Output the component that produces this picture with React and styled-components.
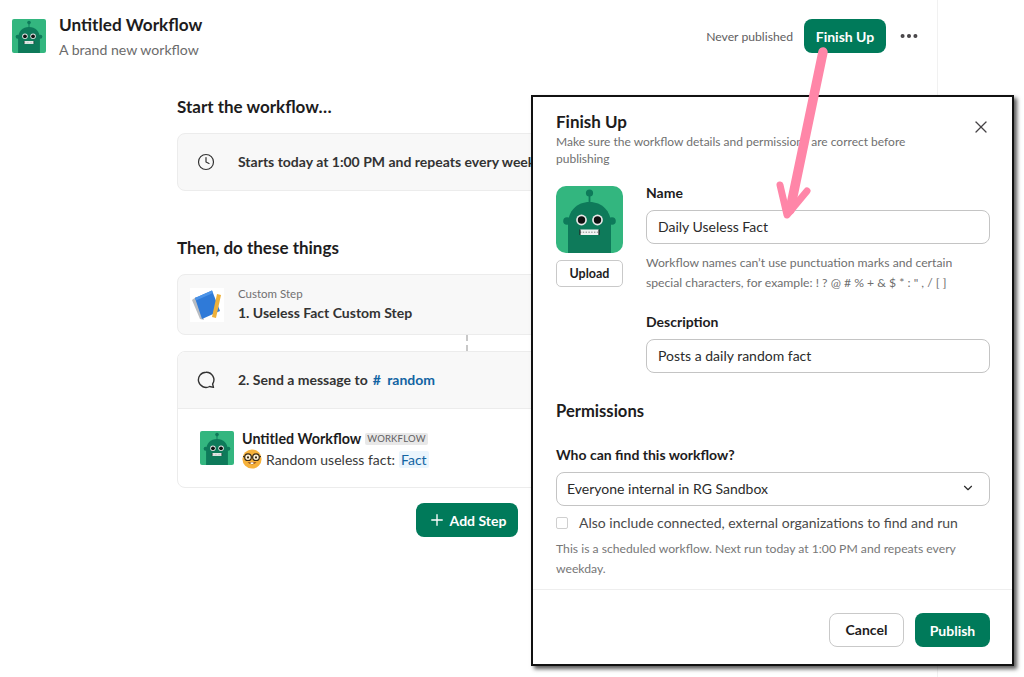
import React from 'react';
import styled, { createGlobalStyle } from 'styled-components';
import { Plus, X, ChevronDown, MoreHorizontal, Clock } from 'lucide-react';

const GlobalStyle = createGlobalStyle`
  html, body {
    margin: 0;
    padding: 0;
    background: #fff;
    font-family: Lato, "Open Sans", sans-serif;
    color: #1d1c1d;
  }
  * { box-sizing: border-box; }
`;

const Page = styled.div`
  position: relative;
  width: 1024px;
  height: 677px;
  overflow: hidden;
  background: #fff;
`;

const Main = styled.div`
  width: 938px;
  height: 677px;
  border-right: 1px solid #f1f1f1;
`;

const Header = styled.header`
  display: flex;
  align-items: flex-start;
  padding: 19px 17px 0 12px;
  height: 96px;
`;

const TitleBlock = styled.div`
  margin: -1px 0 0 13px;
  flex: 1;
`;

const Title = styled.div`
  font-size: 17.2px;
  font-weight: 700;
  line-height: 14px;
`;

const Subtitle = styled.div`
  font-size: 14.1px;
  color: #6b6b6b;
  line-height: 18px;
  margin-top: 9px;
`;

const HeaderRight = styled.div`
  display: flex;
  align-items: center;
  height: 34px;
`;

const Status = styled.span`
  font-size: 12.2px;
  color: #616061;
  margin-right: 11px;
`;

const GreenButton = styled.div`
  display: flex;
  align-items: center;
  justify-content: center;
  background: #007a5a;
  color: #fff;
  font-size: 14px;
  font-weight: 700;
  border-radius: 8px;
  height: 34px;
  width: ${(p) => p.$width}px;
`;

const Dots = styled.div`
  display: flex;
  margin-left: 12px;
  color: #454245;
`;

const Flow = styled.main`
  width: 580px;
  margin-left: 177px;
`;

const SectionTitle = styled.h2`
  margin: 0;
  font-size: 17px;
  font-weight: 700;
  line-height: 22px;
  color: #1d1c1d;
`;

const Card = styled.div`
  border: 1px solid #ececec;
  border-radius: 8px;
  background: #f8f8f8;
  overflow: hidden;
`;

const TriggerCard = styled(Card)`
  display: flex;
  align-items: center;
  height: 58px;
  margin: 15px 0 46px;
`;

const IconSlot = styled.div`
  width: 60px;
  padding-right: 4px;
  display: flex;
  justify-content: center;
  color: #333;
  flex: none;
`;

const StepText = styled.div`
  font-size: 14px;
  font-weight: 700;
  color: #333;
  white-space: nowrap;
  padding-bottom: 2px;
`;

const CustomCard = styled(Card)`
  display: flex;
  align-items: center;
  height: 61px;
  margin-top: 15px;
  padding-left: 12px;
`;

const CustomBody = styled.div`
  margin-left: 14px;
`;

const Eyebrow = styled.div`
  font-size: 11.5px;
  color: #717071;
  line-height: 14px;
  margin-bottom: 3px;
`;

const Connector = styled.div`
  width: 0;
  height: 16px;
  margin-left: 289px;
  border-left: 2px dashed #c8c8c8;
`;

const MessageCard = styled(Card)`
  background: #fff;
  height: 137px;
`;

const MessageHead = styled.div`
  display: flex;
  align-items: center;
  height: 57px;
  background: #f8f8f8;
  border-bottom: 1px solid #ececec;
`;

const ChannelLink = styled.span`
  color: #1264a3;
  margin-left: 5px;
  word-spacing: 3px;
`;

const MessageBody = styled.div`
  display: flex;
  padding: 22px 0 0 22px;
`;

const MessageText = styled.div`
  margin-left: 8px;
`;

const SenderRow = styled.div`
  display: flex;
  align-items: center;
  height: 15px;
  font-size: 14.3px;
  font-weight: 700;
`;

const AppBadge = styled.span`
  margin-left: 4px;
  padding: 0 2px;
  background: #e8e8e8;
  color: #616061;
  border-radius: 2px;
  font-size: 9.5px;
  font-weight: 400;
  line-height: 12px;
  letter-spacing: 0.2px;
`;

const MessageLine = styled.div`
  display: flex;
  align-items: center;
  margin-top: 3px;
  font-size: 14px;
  color: #3a3a3a;
`;

const Variable = styled.span`
  margin-left: 4px;
  padding: 0 2px;
  background: #eaf5fd;
  color: #1264a3;
  border-radius: 2px;
`;

const AddRow = styled.div`
  display: flex;
  justify-content: center;
  margin-top: 15px;
`;

const Modal = styled.section`
  position: absolute;
  left: 531px;
  top: 95px;
  width: 483px;
  height: 571px;
  background: #fff;
  border: 2px solid #111;
  box-shadow: 3px 3px 4px rgba(0, 0, 0, 0.65);
  display: flex;
  flex-direction: column;
`;

const ModalBody = styled.div`
  position: relative;
  flex: 1;
  padding: 15px 22px 0 23px;
  border-bottom: 1px solid #eee;
`;

const ModalTitle = styled.h3`
  margin: 0;
  font-size: 17px;
  font-weight: 700;
  line-height: 20px;
`;

const ModalSub = styled.p`
  margin: 1px 0 0;
  width: 380px;
  font-size: 12px;
  line-height: 17px;
  color: #707070;
`;

const CloseButton = styled.div`
  position: absolute;
  top: 20px;
  right: 21px;
  color: #454245;
  display: flex;
`;

const NameRow = styled.div`
  display: flex;
  margin-top: 19px;
`;

const LogoColumn = styled.div`
  width: 67px;
  flex: none;
  margin-right: 23px;
`;

const SmallButton = styled.div`
  display: flex;
  align-items: center;
  justify-content: center;
  height: 27px;
  margin-top: 7px;
  border: 1px solid #c9c9c9;
  border-radius: 5px;
  font-size: 12.5px;
  font-weight: 700;
`;

const Fields = styled.div`
  flex: 1;
  margin-top: -1px;
`;

const FieldLabel = styled.div`
  font-size: 14px;
  font-weight: 700;
  line-height: 16px;
  margin-bottom: 9px;
  color: #1d1c1d;
`;

const TextBox = styled.div`
  display: flex;
  align-items: center;
  justify-content: space-between;
  height: 34px;
  border: 1px solid #c4c4c4;
  border-radius: 8px;
  font-size: 14px;
  color: #2b2b2b;
  padding: 0 ${(p) => p.$right || 12}px 2px ${(p) => p.$left || 11}px;
`;

const Help = styled.p`
  margin: 9px 0 0;
  font-size: 12.2px;
  line-height: 20px;
  color: #6f6f6f;
`;

const FieldGap = styled.div`
  margin-top: 21px;
`;

const PermTitle = styled.h4`
  margin: 28px 0 0;
  font-size: 16.6px;
  font-weight: 700;
  line-height: 20px;
`;

const PermField = styled.div`
  margin-top: 26px;
`;

const CheckRow = styled.div`
  display: flex;
  align-items: center;
  margin-top: 8px;
  font-size: 14px;
  color: #4a4a4a;
  line-height: 17px;
`;

const Check = styled.span`
  width: 12px;
  height: 12px;
  border: 1px solid #cfcfcf;
  border-radius: 2px;
  margin-right: 11px;
`;

const Note = styled(Help)`
  margin-top: 8px;
  width: 420px;
  color: #777;
`;

const ModalFooter = styled.footer`
  display: flex;
  justify-content: flex-end;
  gap: 11px;
  padding: 23px 22px 0 0;
  height: 74px;
`;

const CancelButton = styled.div`
  display: flex;
  align-items: center;
  justify-content: center;
  width: 75px;
  height: 34px;
  padding-bottom: 2px;
  border: 1px solid #c9c9c9;
  border-radius: 8px;
  font-size: 14px;
  font-weight: 700;
`;

const ArrowLayer = styled.svg`
  position: absolute;
  left: 0;
  top: 0;
  pointer-events: none;
`;

const Robot = ({ size, radius = 10 }) => (
  <svg width={size} height={size} viewBox="0 0 67 67" style={{ flex: 'none', display: 'block' }}>
    <rect width="67" height="67" rx={radius} fill="#33b67f" />
    <path d="M32.6 8h1.8v10h-1.8z" fill="#0e7a5a" />
    <circle cx="33.5" cy="7" r="3.6" fill="#0e7a5a" />
    <circle cx="11" cy="35" r="3.8" fill="#0e7a5a" />
    <circle cx="56" cy="35" r="3.8" fill="#0e7a5a" />
    <path d="M12 67V38C12 25 21 16 33.5 16S55 25 55 38V67Z" fill="#0e7a5a" />
    <circle cx="25.5" cy="34" r="5.4" fill="#e8e8e8" />
    <circle cx="25.5" cy="34" r="3.7" fill="#111" />
    <circle cx="41.5" cy="34" r="5.4" fill="#e8e8e8" />
    <circle cx="41.5" cy="34" r="3.7" fill="#111" />
    <rect x="24" y="43.5" width="19" height="5.5" fill="#f3f3f3" />
    <path d="M24 46.2h19" stroke="#777" strokeWidth="0.9" strokeDasharray="1.4 1.4" />
    <path d="M24 43.5v5.5M43 43.5v5.5" stroke="#222" strokeWidth="1.2" />
  </svg>
);

const BookIcon = () => (
  <svg width="34" height="34" viewBox="0 0 34 34" style={{ flex: 'none' }}>
    <rect width="34" height="34" fill="#fff" />
    <path d="M2 12 L10 31 L14 32 L6 9 Z" fill="#b9bdc2" />
    <path d="M5 10 L22 2.5 L30 23 L12 31 Z" fill="#2f7ad8" />
    <path d="M5 10 L22 2.5 L23 5 L6 12.5 Z" fill="#4b93e8" />
    <path d="M27 6 L31 7 L26 30 L22 29 Z" fill="#eeb13c" />
  </svg>
);

const NerdFace = () => (
  <svg width="20" height="20" viewBox="0 0 20 20" style={{ flex: 'none', marginRight: 4 }}>
    <circle cx="10" cy="10" r="9.6" fill="#f7b23b" />
    <circle cx="6" cy="8.2" r="3.3" fill="#fff3d8" stroke="#3a2c18" strokeWidth="1.2" />
    <circle cx="14" cy="8.2" r="3.3" fill="#fff3d8" stroke="#3a2c18" strokeWidth="1.2" />
    <path d="M9.2 8h1.6M1 7.5l1.8.3M19 7.5l-1.8.3" stroke="#3a2c18" strokeWidth="1.2" />
    <circle cx="6" cy="8.4" r="1.1" fill="#3a2a14" />
    <circle cx="14" cy="8.4" r="1.1" fill="#3a2a14" />
    <path d="M5.5 13.2c2.5 2.6 6.5 2.6 9 0z" fill="#8a4a1c" />
    <rect x="8.6" y="13.4" width="2.8" height="1.6" fill="#fff" />
  </svg>
);

const ChatBubble = () => (
  <svg width="18" height="18" viewBox="0 0 18 18" fill="none" stroke="#333" strokeWidth="1.4">
    <path d="M9 1.2a7.6 7.6 0 1 0 3.6 14.3l3.9.9-.9-3.4A7.6 7.6 0 0 0 9 1.2Z" strokeLinejoin="round" />
  </svg>
);

const App = () => {
  return (
    <Page>
      <GlobalStyle />
      <Main>
        <Header>
          <Robot size={34} radius={4} />
          <TitleBlock>
            <Title>Untitled Workflow</Title>
            <Subtitle>A brand new workflow</Subtitle>
          </TitleBlock>
          <HeaderRight>
            <Status>Never published</Status>
            <GreenButton $width={82}>Finish Up</GreenButton>
            <Dots>
              <MoreHorizontal size={22} strokeWidth={2.4} />
            </Dots>
          </HeaderRight>
        </Header>
        <Flow>
          <SectionTitle>Start the workflow…</SectionTitle>
          <TriggerCard>
            <IconSlot>
              <Clock size={18} strokeWidth={1.6} />
            </IconSlot>
            <StepText>Starts today at 1:00 PM and repeats every weekday</StepText>
          </TriggerCard>
          <SectionTitle>Then, do these things</SectionTitle>
          <CustomCard>
            <BookIcon />
            <CustomBody>
              <Eyebrow>Custom Step</Eyebrow>
              <StepText>1. Useless Fact Custom Step</StepText>
            </CustomBody>
          </CustomCard>
          <Connector />
          <MessageCard>
            <MessageHead>
              <IconSlot>
                <ChatBubble />
              </IconSlot>
              <StepText>
                2. Send a message to<ChannelLink># random</ChannelLink>
              </StepText>
            </MessageHead>
            <MessageBody>
              <Robot size={34} radius={4} />
              <MessageText>
                <SenderRow>
                  Untitled Workflow
                  <AppBadge>WORKFLOW</AppBadge>
                </SenderRow>
                <MessageLine>
                  <NerdFace />
                  Random useless fact:
                  <Variable>Fact</Variable>
                </MessageLine>
              </MessageText>
            </MessageBody>
          </MessageCard>
          <AddRow>
            <GreenButton $width={102}>
              <Plus size={18} strokeWidth={1.8} style={{ marginRight: 4 }} />
              Add Step
            </GreenButton>
          </AddRow>
        </Flow>
      </Main>

      <Modal>
        <ModalBody>
          <ModalTitle>Finish Up</ModalTitle>
          <ModalSub>Make sure the workflow details and permissions are correct before publishing</ModalSub>
          <CloseButton>
            <X size={20} strokeWidth={1.5} />
          </CloseButton>
          <NameRow>
            <LogoColumn>
              <Robot size={67} />
              <SmallButton>Upload</SmallButton>
            </LogoColumn>
            <Fields>
              <FieldLabel>Name</FieldLabel>
              <TextBox>Daily Useless Fact</TextBox>
              <Help>
                Workflow names can’t use punctuation marks and certain
                <br />
                special characters, for example: ! ? @ # % + &amp; $ * : " , / [ ]
              </Help>
              <FieldGap>
                <FieldLabel>Description</FieldLabel>
                <TextBox>Posts a daily random fact</TextBox>
              </FieldGap>
            </Fields>
          </NameRow>
          <PermTitle>Permissions</PermTitle>
          <PermField>
            <FieldLabel>Who can find this workflow?</FieldLabel>
            <TextBox $left={10} $right={14}>
              Everyone internal in RG Sandbox
              <ChevronDown size={14} strokeWidth={2} />
            </TextBox>
          </PermField>
          <CheckRow>
            <Check />
            Also include connected, external organizations to find and run
          </CheckRow>
          <Note>This is a scheduled workflow. Next run today at 1:00 PM and repeats every weekday.</Note>
        </ModalBody>
        <ModalFooter>
          <CancelButton>Cancel</CancelButton>
          <GreenButton $width={75}>Publish</GreenButton>
        </ModalFooter>
      </Modal>

      <ArrowLayer width="1024" height="677" viewBox="0 0 1024 677">
        <path d="M823 52 L790 210" stroke="#ff86a8" strokeWidth="9.5" strokeLinecap="round" fill="none" />
        <path d="M780 185 L787 215 L807 191" stroke="#ff86a8" strokeWidth="7" strokeLinecap="round" strokeLinejoin="round" fill="none" />
      </ArrowLayer>
    </Page>
  );
};

export default App;
